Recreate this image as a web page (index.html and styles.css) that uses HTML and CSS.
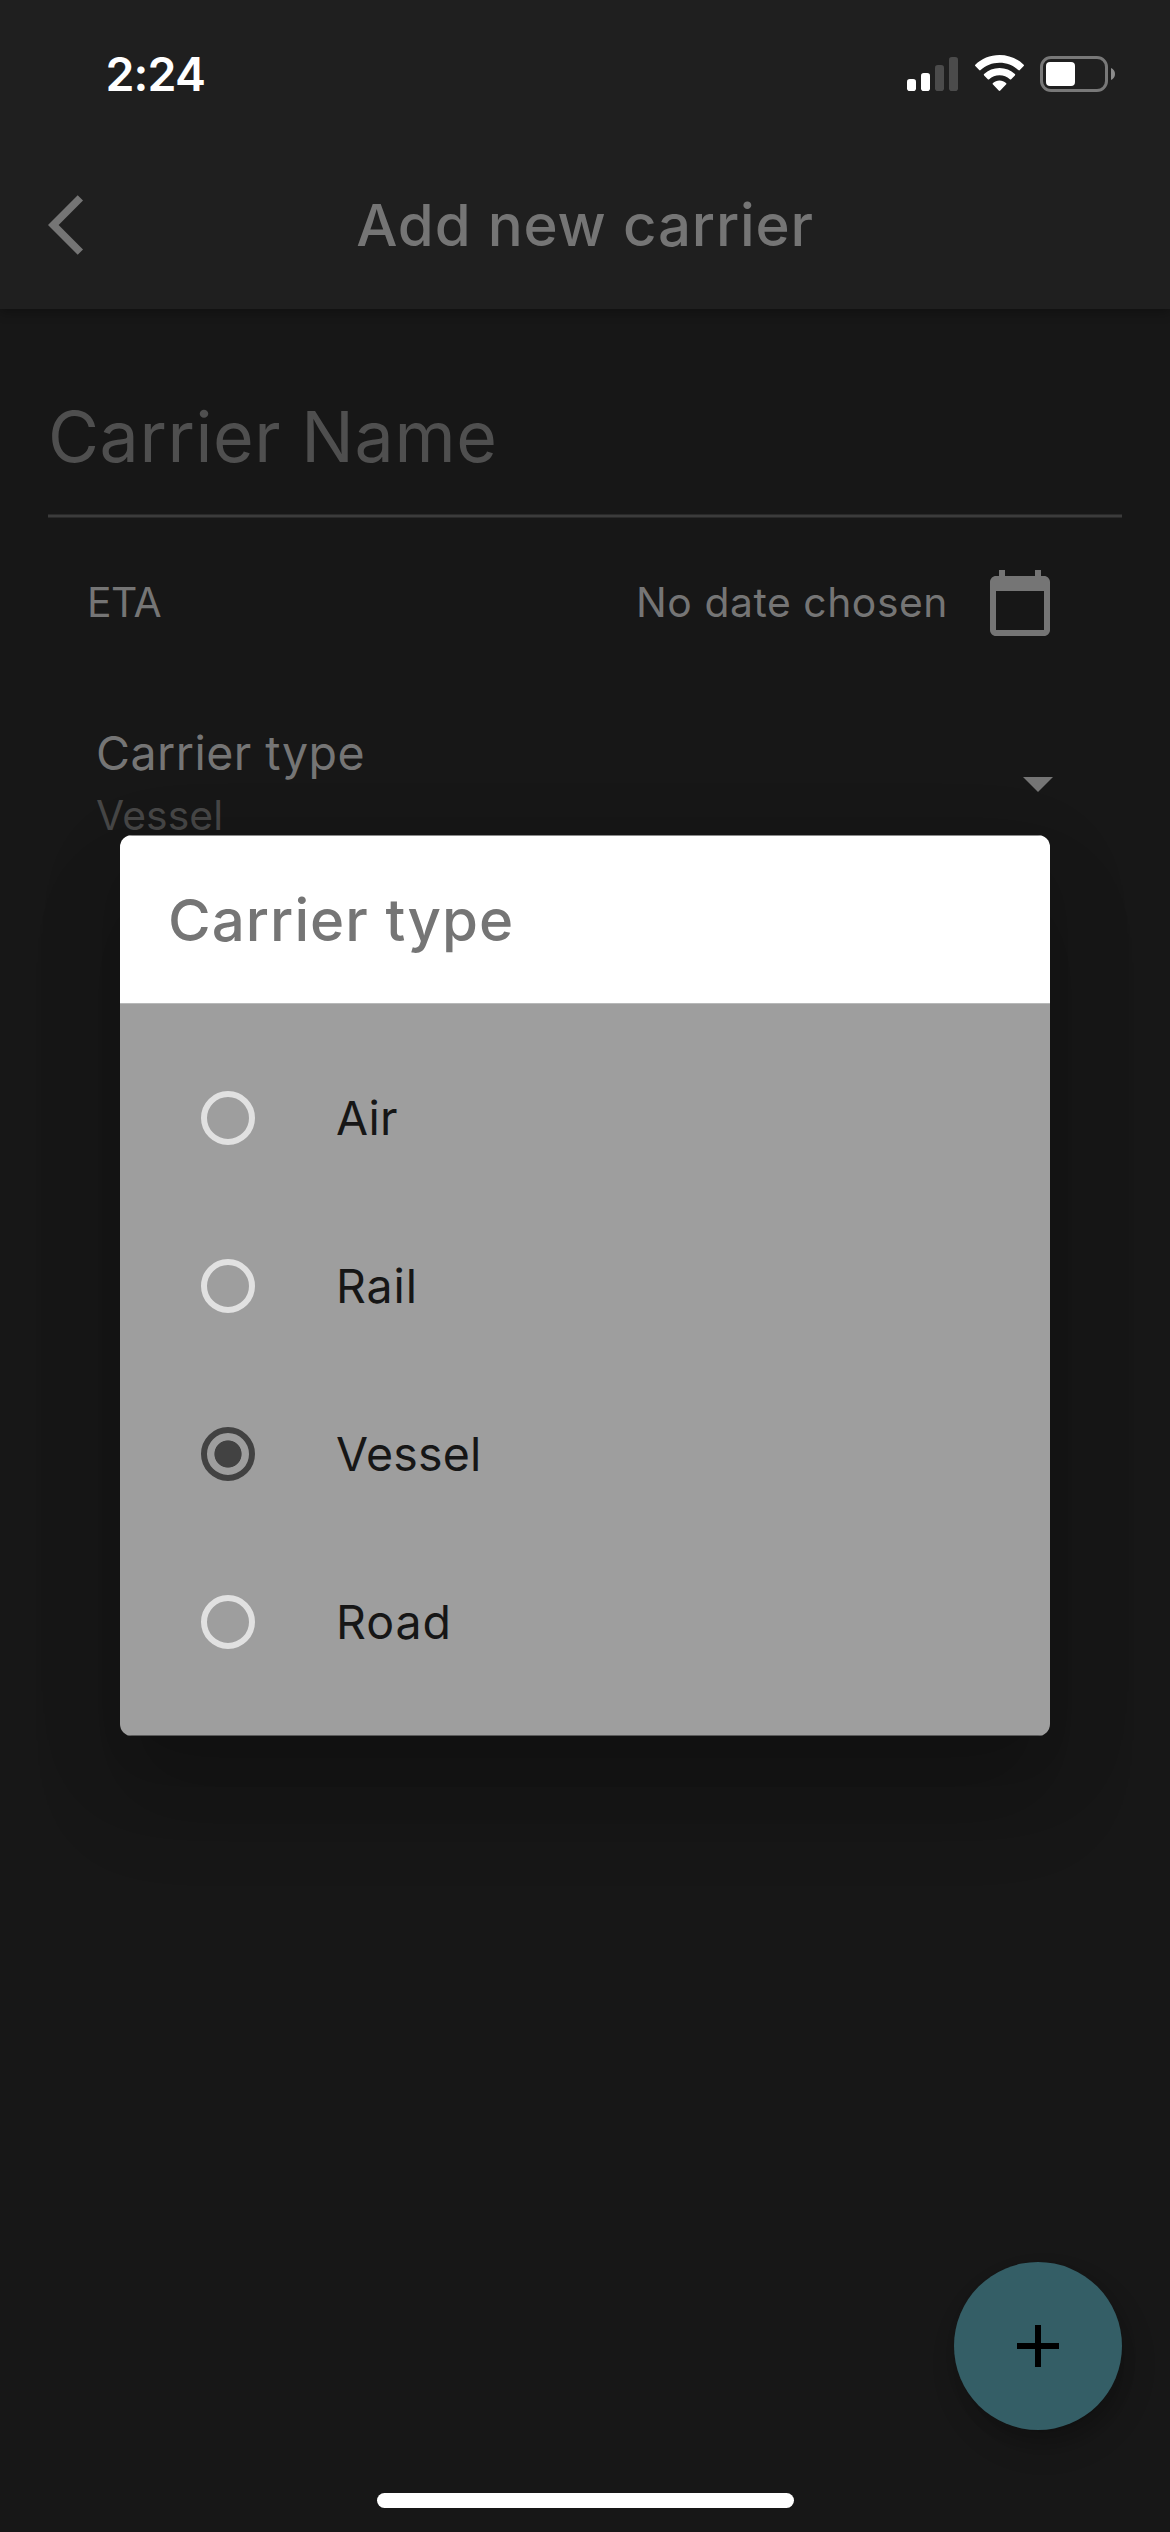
FILE: index.html
```
<!DOCTYPE html>
<html lang="en">
<head>
<meta charset="utf-8">
<title>Add new carrier</title>
<link rel="stylesheet" href="styles.css">
</head>
<body>
<div class="screen">
  <header class="top">
    <div class="status">
      <span class="clock">2:24</span>
      <div class="indicators">
        <svg class="signal" width="51" height="36" viewBox="0 0 51 36">
          <rect x="0" y="24" width="9" height="12" rx="2.8" fill="#fff"/>
          <rect x="14" y="18" width="9" height="18" rx="2.8" fill="#fff"/>
          <rect x="28" y="10" width="9" height="26" rx="2.8" fill="#4b4b4b"/>
          <rect x="42" y="2" width="9" height="34" rx="2.8" fill="#4b4b4b"/>
        </svg>
        <svg class="wifi" width="49" height="36" viewBox="0 0 49 36">
          <path fill="#fff" d="M24.5 0C15 0 6.500 3.700 .3 9.700c-.4.400-.4 1 0 1.400l3.900 4c.4.400 1 .4 1.400 0C10.600 10.600 17.200 7.800 24.500 7.800s13.900 2.800 18.900 7.300c.4.400 1 .4 1.400 0l3.900-4c.4-.4.4-1 0-1.400C42.500 3.700 34 0 24.500 0zM24.500 13c-5.900 0-11.300 2.300-15.400 6-.4.400-.4 1 0 1.400l3.700 3.900c.4.400 1 .4 1.400 0 2.800-2.500 6.300-4 10.300-4s7.500 1.500 10.300 4c.4.400 1 .4 1.400 0l3.700-3.900c.4-.4.4-1 0-1.400-4.100-3.700-9.500-6-15.400-6zM24.500 25.600c-2.500 0-4.700.900-6.500 2.400-.5.400-.5 1.100 0 1.500l5.700 6c.4.500 1.200.5 1.600 0l5.700-6c.5-.4.5-1.100 0-1.500-1.800-1.500-4-2.400-6.500-2.400z"/>
        </svg>
        <svg class="battery" width="76" height="36" viewBox="0 0 76 36">
          <rect x="1.500" y="1.500" width="65" height="33" rx="9.500" fill="none" stroke="#787878" stroke-width="3"/>
          <rect x="6" y="6" width="29" height="24" rx="4" fill="#fff"/>
          <path d="M71 12c2.600 1.100 4 3.300 4 6s-1.400 4.900-4 6z" fill="#8c8c8c"/>
        </svg>
      </div>
    </div>
    <div class="appbar">
      <svg class="back" width="72" height="72" viewBox="0 0 24 24"><path d="M11.670 3.870L9.900 2.100 0 12l9.900 9.900 1.770-1.770L3.540 12z"/></svg>
      <h1 class="title">Add new carrier</h1>
    </div>
  </header>

  <main class="form">
    <div class="name-field">Carrier Name</div>
    <div class="eta-row">
      <span class="eta">ETA</span>
      <span class="date">No date chosen</span>
      <svg width="72" height="72" viewBox="0 0 24 24"><path d="M20 3h-1V1h-2v2H7V1H5v2H4c-1.100 0-2 .9-2 2v16c0 1.100.9 2 2 2h16c1.100 0 2-.9 2-2V5c0-1.100-.9-2-2-2zm0 18H4V8h16v13z"/></svg>
    </div>
    <div class="type-row">
      <div>
        <div class="type-label">Carrier type</div>
        <div class="type-value">Vessel</div>
      </div>
      <svg class="caret" width="72" height="72" viewBox="0 0 24 24"><path d="M7 10l5 5 5-5z"/></svg>
    </div>
  </main>

  <div class="fab">
    <svg width="72" height="72" viewBox="0 0 24 24"><path d="M19 13h-6v6h-2v-6H5v-2h6V5h2v6h6z"/></svg>
  </div>

  <section class="dialog">
    <h2 class="dialog-title">Carrier type</h2>
    <div class="options">
      <div class="option"><span class="radio"></span><span>Air</span></div>
      <div class="option"><span class="radio"></span><span>Rail</span></div>
      <div class="option"><span class="radio selected"></span><span>Vessel</span></div>
      <div class="option"><span class="radio"></span><span>Road</span></div>
    </div>
  </section>

  <div class="home-indicator"></div>
</div>
</body>
</html>
```
FILE: styles.css
```
* { box-sizing: border-box; }

body {
  margin: 0;
  background: #171717;
  font-family: Inter, "Liberation Sans", sans-serif;
}

svg { display: block; flex: none; }

.screen {
  position: relative;
  width: 1170px;
  height: 2532px;
  overflow: hidden;
  background: #171717;
  color: #757575;
}

.top {
  height: 309px;
  background: #1f1f1f;
  box-shadow: 0 4px 10px rgba(0, 0, 0, .28);
}

.status {
  display: flex;
  align-items: center;
  justify-content: space-between;
  height: 141px;
  padding: 7px 54px 0 105.500px;
}

.clock {
  font-size: 46.500px;
  font-weight: 600;
  letter-spacing: -.85px;
  color: #fff;
}

.indicators { display: flex; margin-bottom: 1px; }
.wifi { margin-left: 16.500px; }
.battery { margin: 1px 0 0 16.500px; }

.appbar {
  display: grid;
  grid-template-columns: 1fr auto 1fr;
  align-items: center;
  height: 168px;
  padding: 0 48px;
  fill: #757575;
}

.title {
  margin: 0;
  font-size: 58.200px;
  font-weight: 500;
  letter-spacing: .82px;
}

.name-field {
  height: 209px;
  margin: 0 48px;
  padding-top: 84px;
  border-bottom: 1px solid #292929;
  box-shadow: inset 0 -2px #3b3b3b, inset 0 -3px #292929;
  font-size: 69.800px;
  line-height: 87px;
  letter-spacing: .62px;
  color: #4f4f4f;
}

.eta-row {
  display: flex;
  align-items: center;
  height: 169px;
  padding: 0 114px 0 87px;
  font-size: 40.800px;
  letter-spacing: -.4px;
  fill: #757575;
}

.eta, .date { padding-bottom: 2px; }

.date {
  margin: 0 36px 0 auto;
  letter-spacing: .56px;
}

.type-row {
  display: flex;
  justify-content: space-between;
  margin-top: 30px;
  padding: 0 96px;
}

.type-label {
  font-size: 46.500px;
  line-height: 72px;
  letter-spacing: .48px;
}

.type-value {
  font-size: 40.800px;
  line-height: 53px;
  letter-spacing: .1px;
  color: #464646;
}

.caret {
  margin-top: 29.500px;
  fill: #757575;
}

.dialog {
  position: absolute;
  top: 835px;
  left: 120px;
  width: 930px;
  overflow: hidden;
  border-radius: 12px;
  box-shadow: 0 33px 45px -21px rgba(0, 0, 0, .08),
    0 66px 90px rgba(0, 0, 0, .15),
    0 27px 90px 6px rgba(0, 0, 0, .08);
}

.dialog-title {
  height: 169px;
  margin: 0;
  padding-left: 48px;
  border-top: 1px solid #8b8b8b;
  border-bottom: 1px solid #b8b9b9;
  background: #fff;
  font-size: 58.200px;
  font-weight: 500;
  line-height: 169px;
  letter-spacing: 1.050px;
}

.options {
  padding: 30px 0 29px;
  border-bottom: 1px solid #5a5a5a;
  background: #9e9e9e;
  color: #161616;
}

.option {
  display: flex;
  align-items: center;
  gap: 81px;
  height: 168px;
  padding-left: 81px;
  font-size: 46.500px;
  letter-spacing: .2px;
}

/* Labels starting with R run slightly wider */
.option:nth-child(even) { letter-spacing: .9px; }

.radio {
  width: 54px;
  height: 54px;
  border: 6px solid #e1e1e1;
  border-radius: 50%;
}

.radio.selected {
  border-color: #424242;
  background: radial-gradient(circle, #424242 13.200px, transparent 14px);
}

.fab {
  position: absolute;
  top: 2262px;
  left: 954px;
  display: grid;
  place-items: center;
  width: 168px;
  height: 168px;
  border-radius: 50%;
  background: #345e66;
  box-shadow: 3px 9px 15px -3px rgba(0, 0, 0, .15),
    6px 18px 30px rgba(0, 0, 0, .16);
}

.home-indicator {
  position: absolute;
  top: 2493px;
  left: 377px;
  width: 417px;
  height: 15px;
  border-radius: 8px;
  background: #fff;
}
```
